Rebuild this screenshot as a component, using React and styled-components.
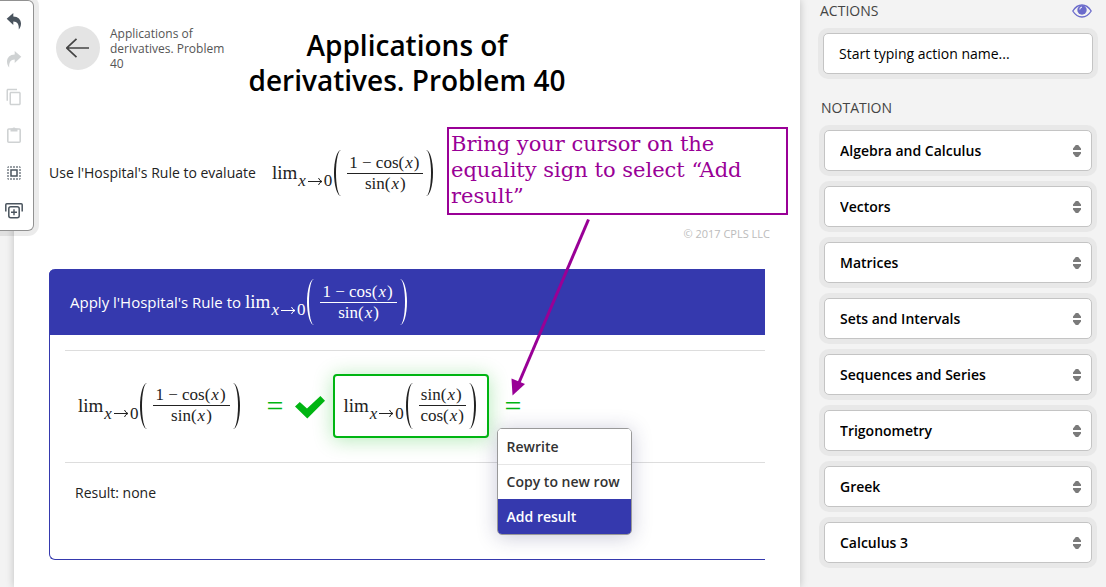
import React from "react";
import styled, { createGlobalStyle, css } from "styled-components";
import { MdContentCopy, MdSelectAll } from "react-icons/md";

const blue = "#3539ae";
const green = "#00b512";
const purple = "#990096";

const GlobalStyle = createGlobalStyle`
  * { box-sizing: border-box; }
  body {
    margin: 0;
    background: #f3f3f3;
    color: #222;
    font: 14px/20px "Open Sans", "Liberation Sans", sans-serif;
  }
  button, input, select { font: inherit; color: inherit; }
`;

const Page = styled.div`
  display: flex;
  min-height: 100vh;
  padding-left: 14px;
`;

const Toolbar = styled.nav`
  position: absolute;
  z-index: 3;
  top: 0;
  left: 0;
  display: flex;
  flex-direction: column;
  width: 34px;
  padding: 1px 5px 0 0;
  background: #fff;
  border: 1px solid #919191;
  border-left: 0;
  border-radius: 0 6px 6px 0;
  box-shadow: 0 0 0 5px rgba(0, 0, 0, 0.08);
`;

const ToolButton = styled.button`
  display: grid;
  place-items: center;
  height: 38px;
  padding: 0;
  border: 0;
  background: none;
  color: #4a545e;
  &:disabled { color: #cfd2d3; }
  svg { display: block; }
`;

const Sheet = styled.main`
  position: relative;
  flex: 1;
  min-width: 0;
  padding: 26px 35px 24px;
  background: #fff;
  box-shadow: 0 0 8px rgba(0, 0, 0, 0.22);
`;

const Header = styled.header`
  display: grid;
  grid-template-columns: 1fr 340px 1fr;
  align-items: start;
  margin-bottom: 50px;
`;

const Back = styled.div`
  display: flex;
  gap: 10px;
  padding-left: 7px;
  color: #555;
  font-size: 12px;
  line-height: 15px;
`;

const BackButton = styled.button`
  display: grid;
  place-items: center;
  flex: none;
  width: 44px;
  height: 44px;
  padding: 0;
  border: 0;
  border-radius: 50%;
  background: #e4e4e4;
  color: #444;
`;

const Title = styled.h1`
  margin: 2px 0 0;
  color: #000;
  font-size: 28px;
  font-weight: 600;
  line-height: 35px;
  text-align: center;
`;

const Problem = styled.div`
  display: flex;
  align-items: center;
  gap: 16px;
  height: 50px;
`;

const Copyright = styled.p`
  margin: 26px -5px 25px 0;
  color: #bbb;
  font-size: 11px;
  text-align: right;
`;

const Step = styled.section`
  border: solid ${blue};
  border-width: 0 0 1px 1px;
  border-radius: 6px 0 0 6px;
`;

const StepHeader = styled.h2`
  display: flex;
  align-items: center;
  gap: 4px;
  height: 66px;
  margin: 0 0 0 -1px;
  padding-left: 21px;
  border-radius: 6px 0 0 0;
  background: ${blue};
  color: #fff;
  font-size: 15px;
  font-weight: 400;
`;

const StepBody = styled.div`
  padding: 15px 0 56px 15px;
`;

const Row = styled.div`
  display: flex;
  align-items: center;
  height: 113px;
  padding: 0 0 2px 13px;
  border: solid #ddd;
  border-width: 1px 0;
`;

const Result = styled.p`
  margin: 20px 0 0 10px;
`;

const Math = styled.span`
  display: inline-flex;
  align-items: center;
  font-family: "Liberation Serif", serif;
  font-size: 17px;
  line-height: 20px;
  white-space: nowrap;
  i { padding: 0 1px; }
`;

const Lim = styled.span`
  font-size: 19px;
`;

const Sub = styled.span`
  display: flex;
  align-items: center;
  gap: 1px;
  padding: 16px 2px 0 0;
`;

const Paren = styled.span`
  width: 7px;
  height: 46px;
  ${({ $side }) =>
    $side === "left"
      ? css`
          border-left: 2px solid;
          border-radius: 7px 0 0 7px / 23px 0 0 23px;
        `
      : css`
          border-right: 2px solid;
          border-radius: 0 7px 7px 0 / 0 23px 23px 0;
        `}
`;

const Fraction = styled.span`
  display: flex;
  flex-direction: column;
  align-items: center;
  margin: 0 3px 0 6px;
`;

const Numerator = styled.span`
  padding: 0 4px 0 2px;
  border-bottom: 1px solid;
`;

const Chosen = styled.span`
  display: flex;
  align-items: center;
  height: 64px;
  margin-left: 8px;
  padding: 0 11px 0 8px;
  border: 2px solid ${green};
  border-radius: 4px;
  background: #fff;
  box-shadow: 0 2px 20px rgba(0, 181, 18, 0.3);
`;

const EqualsAnchor = styled.div`
  position: relative;
  margin-left: ${({ $gap }) => $gap}px;
`;

const Equals = styled.button`
  display: block;
  padding: 0;
  border: 0;
  background: none;
  color: ${green};
  font-family: "Liberation Serif", serif;
  font-size: 30px;
  line-height: 28px;
`;

const Check = styled.svg`
  display: block;
  margin: 4px 0 0 12px;
`;

const Menu = styled.div`
  position: absolute;
  z-index: 1;
  top: 36px;
  left: -8px;
  width: 135px;
  overflow: hidden;
  border: 1px solid #999;
  border-radius: 5px;
  background: #fff;
  box-shadow: 0 2px 20px rgba(40, 40, 100, 0.25);
`;

const MenuItem = styled.button`
  display: block;
  width: 100%;
  height: 35px;
  padding: 0 9px;
  border: 0;
  border-top: 1px solid ${({ $active }) => ($active ? blue : "#e6e6e6")};
  background: ${({ $active }) => ($active ? blue : "#fff")};
  color: ${({ $active }) => ($active ? "#fff" : "#333")};
  font-weight: 600;
  text-align: left;
  white-space: nowrap;
  &:first-child { border-top-color: #fff; }
`;

const Callout = styled.aside`
  position: absolute;
  z-index: 2;
  top: 127px;
  left: 433px;
  width: 341px;
  height: 88px;
  padding: 2px;
  border: 2px solid ${purple};
  color: ${purple};
  font-family: "DejaVu Serif", serif;
  font-size: 21px;
  line-height: 26px;
`;

const Pointer = styled.svg`
  position: absolute;
  z-index: 2;
  top: 215px;
  left: 486px;
  pointer-events: none;
`;

const Side = styled.aside`
  flex: none;
  width: 306px;
  padding: 0 13px 24px 23px;
`;

const SideHeading = styled.div`
  display: flex;
  align-items: center;
  justify-content: space-between;
  height: 21px;
  margin: 0 1px 12px -3px;
  color: #444;
`;

const Heading = styled.h2`
  margin: 0;
  font-size: 14px;
  font-weight: 400;
`;

const EyeButton = styled.button`
  display: block;
  padding: 0;
  border: 0;
  background: none;
  color: #6b6bcb;
  svg { display: block; }
`;

const field = css`
  display: block;
  width: 100%;
  height: 41px;
  padding: 0 15px;
  border: 1px solid #c4c4c4;
  border-radius: 5px;
  outline: 0;
  background: #fff;
  box-shadow: 0 0 0 5px #e8e8e8;
  color: #000;
`;

const Search = styled.input`
  ${field}
  &::placeholder { color: #000; opacity: 1; }
`;

const Notation = styled.section`
  display: flex;
  flex-direction: column;
  gap: 15px;
  margin: 24px 1px 0;
  color: #444;
  ${Heading} { margin: 0 0 -3px -3px; }
`;

const SelectLabel = styled.label`
  display: grid;
  align-items: center;
  > * { grid-area: 1 / 1; }
  svg { justify-self: end; margin-right: 11px; color: #7b7b7b; pointer-events: none; }
`;

const Select = styled.select`
  ${field}
  appearance: none;
  font-weight: 600;
`;

function UndoIcon({ flip }) {
  return (
    <svg width="16" height="17" viewBox="0 0 16 17" fill="currentColor">
      <path
        transform={flip ? "matrix(-1 0 0 1 16 0)" : undefined}
        d="M.7 5.8 7.3 0v3.4C12 3.6 15 6.4 15 10.6c0 2.4-.8 4.4-2.2 5.9.3-5.3-1.4-7.700-5.500-7.900V12z"
      />
    </svg>
  );
}

function PasteIcon() {
  return (
    <svg width="16" height="18" viewBox="0 0 16 18" fill="none" stroke="currentColor">
      <rect x="1.8" y="3" width="12.400" height="13.200" rx="1" strokeWidth="1.600" />
      <path d="M4.500 2.600h1.800a1.800 1.800 0 0 1 3.400 0h1.800v2.900h-7z" fill="currentColor" stroke="none" />
    </svg>
  );
}

function AddRowIcon() {
  return (
    <svg width="18" height="16" viewBox="0 0 18 16" fill="none" stroke="currentColor">
      <path d="M.8 8.500V1.800q0-1 1-1h14.400q1 0 1 1v6.700" strokeWidth="1.500" />
      <rect x="3.800" y="3.800" width="10.400" height="11" rx="2" strokeWidth="1.500" />
      <path d="M9 6.300v6M6 9.300h6" strokeWidth="1.400" />
    </svg>
  );
}

const tools = [
  { label: "Undo", icon: <UndoIcon /> },
  { label: "Redo", icon: <UndoIcon flip />, disabled: true },
  { label: "Copy", icon: <MdContentCopy size={18} />, disabled: true },
  { label: "Paste", icon: <PasteIcon />, disabled: true },
  { label: "Select all", icon: <MdSelectAll size={18} /> },
  { label: "Add row", icon: <AddRowIcon /> },
];

const notations = [
  "Algebra and Calculus",
  "Vectors",
  "Matrices",
  "Sets and Intervals",
  "Sequences and Series",
  "Trigonometry",
  "Greek",
  "Calculus 3",
];

function Fn({ name }) {
  return (
    <>
      {name}(<i>x</i>)
    </>
  );
}

function Limit({ top, bottom }) {
  return (
    <Math>
      <Lim>lim</Lim>
      <Sub>
        <i>x</i>
        <svg width="15" height="9" viewBox="0 0 15 9" fill="none" stroke="currentColor">
          <path d="M0 4.500h14M10.500 1q1 2.800 3.500 3.500-2.500.7-3.500 3.500" />
        </svg>
        <span>0</span>
      </Sub>
      <Paren $side="left" />
      <Fraction>
        <Numerator>{top}</Numerator>
        <span>{bottom}</span>
      </Fraction>
      <Paren $side="right" />
    </Math>
  );
}

const original = {
  top: (
    <>
      1 − <Fn name="cos" />
    </>
  ),
  bottom: <Fn name="sin" />,
};

export default function App() {
  return (
    <>
      <GlobalStyle />
      <Page>
        <Toolbar aria-label="Editing">
          {tools.map((t) => (
            <ToolButton key={t.label} type="button" aria-label={t.label} disabled={t.disabled}>
              {t.icon}
            </ToolButton>
          ))}
        </Toolbar>

        <Sheet>
          <Header>
            <Back>
              <BackButton type="button" aria-label="Back">
                <svg width="24" height="20" viewBox="0 0 24 20" fill="none" stroke="currentColor" strokeWidth="1.700">
                  <path d="M23 10H.8M10.500.8.800 10l9.700 9.200" />
                </svg>
              </BackButton>
              <span>Applications of derivatives. Problem 40</span>
            </Back>
            <Title>Applications of derivatives. Problem 40</Title>
          </Header>

          <Problem>
            <span>Use l'Hospital's Rule to evaluate</span>
            <Limit {...original} />
          </Problem>
          <Copyright>© 2017 CPLS LLC</Copyright>

          <Step>
            <StepHeader>
              <span>Apply l'Hospital's Rule to</span>
              <Limit {...original} />
            </StepHeader>
            <StepBody>
              <Row>
                <Limit {...original} />
                <EqualsAnchor $gap={27}>
                  <Equals type="button">=</Equals>
                </EqualsAnchor>
                <Check width="30" height="23" viewBox="0 0 30 23" fill={green}>
                  <path d="M0 10.500 4.800 6l7.200 6.500L25.400 0 30 4.800 12.300 22.600z" />
                </Check>
                <Chosen>
                  <Limit top={<Fn name="sin" />} bottom={<Fn name="cos" />} />
                </Chosen>
                <EqualsAnchor $gap={16}>
                  <Equals type="button" aria-haspopup="menu" aria-expanded="true">
                    =
                  </Equals>
                  <Menu role="menu">
                    <MenuItem type="button" role="menuitem">Rewrite</MenuItem>
                    <MenuItem type="button" role="menuitem">Copy to new row</MenuItem>
                    <MenuItem type="button" role="menuitem" $active>Add result</MenuItem>
                  </Menu>
                </EqualsAnchor>
              </Row>
              <Result>Result: none</Result>
            </StepBody>
          </Step>

          <Callout>Bring your cursor on the equality sign to select “Add result”</Callout>
          <Pointer width="100" height="190" viewBox="0 0 100 190">
            <path d="M88.500 4.500 18 170" stroke={purple} strokeWidth="3" />
            <path d="M12.500 180.500 11.500 163.500 25 169z" fill={purple} />
          </Pointer>
        </Sheet>

        <Side>
          <SideHeading>
            <Heading>ACTIONS</Heading>
            <EyeButton type="button" aria-label="Toggle visibility">
              <svg width="20" height="14" viewBox="0 0 20 14">
                <path d="M.8 7Q4.500 1 10 1t9.200 6Q15.500 13 10 13T.8 7z" fill="none" stroke="currentColor" strokeWidth="1.300" />
                <circle cx="10" cy="6" r="4.700" fill="currentColor" />
                <path d="M7.700 5.500Q8 3.500 10 3.200" fill="none" stroke="#e4e4fa" strokeWidth="1.200" />
              </svg>
            </EyeButton>
          </SideHeading>
          <Search type="text" aria-label="Action name" placeholder="Start typing action name..." />
          <Notation>
            <Heading>NOTATION</Heading>
            {notations.map((name) => (
              <SelectLabel key={name}>
                <Select aria-label={name}>
                  <option>{name}</option>
                </Select>
                <svg width="8" height="12" viewBox="0 0 8 12" fill="currentColor">
                  <path d="M0 5V3.500L2.800 0h2.400L8 3.500V5zM0 7v1.500L2.800 12h2.400L8 8.500V7z" />
                </svg>
              </SelectLabel>
            ))}
          </Notation>
        </Side>
      </Page>
    </>
  );
}
